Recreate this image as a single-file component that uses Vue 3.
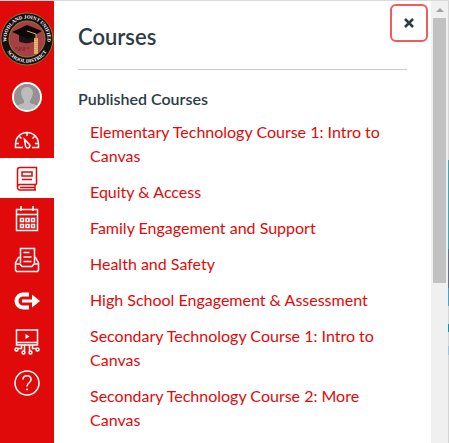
<script setup>
import { ref } from 'vue';

const open = ref(true);

const courses = ref([
  { id: 1, name: 'Elementary Technology Course 1: Intro to Canvas' },
  { id: 2, name: 'Equity & Access' },
  { id: 3, name: 'Family Engagement and Support' },
  { id: 4, name: 'Health and Safety' },
  { id: 5, name: 'High School Engagement & Assessment' },
  { id: 6, name: 'Secondary Technology Course 1: Intro to Canvas' },
  { id: 7, name: 'Secondary Technology Course 2: More Canvas' },
]);
</script>

<template>
  <div class="app">
    <nav class="global-nav" aria-label="Global">
      <a href="#" class="logo" aria-label="Home">
        <svg viewBox="0 0 54 54">
          <defs>
            <path id="arc-top" d="M10.200 38.800A20.500 20.500 0 1 1 43.800 38.800" />
            <path id="arc-bottom" d="M3.400 27A23.600 23.600 0 0 0 50.600 27" />
          </defs>
          <circle cx="27" cy="27" r="26" fill="#15100e" stroke="#8a7444" stroke-width="1" />
          <circle cx="27" cy="27" r="18" fill="#a64042" stroke="#9c7c3c" stroke-width="1" />
          <text class="seal" text-anchor="middle"><textPath href="#arc-top" startOffset="50%">WOODLAND JOINT UNIFIED</textPath></text>
          <text class="seal" text-anchor="middle"><textPath href="#arc-bottom" startOffset="50%">SCHOOL DISTRICT</textPath></text>
          <path d="M19 21v8c3 3 13 3 17-1v-7z" fill="#1d1412" />
          <path d="M12 20l15-7 15 6-14 8z" fill="#0b0808" />
          <path d="M27 19l9 3v4" fill="none" stroke="#d8a860" stroke-width="1" />
          <path d="M34 26h4v16h-4z" fill="#d9a25c" />
          <path d="M35 28v13M37 28v13" stroke="#f0d08c" stroke-width="1" stroke-dasharray="1 1" />
          <path d="M15 36h14M18 38h8" stroke="#6d2426" stroke-width="1" stroke-dasharray="3 1" />
        </svg>
      </a>

      <ul>
        <li>
          <a href="#" class="avatar-link" aria-label="Account">
            <svg class="avatar" viewBox="0 0 30 30">
              <defs>
                <clipPath id="face"><circle cx="15" cy="15" r="13" /></clipPath>
              </defs>
              <circle cx="15" cy="15" r="13" fill="#929292" />
              <g clip-path="url(#face)" fill="#bcbcbc">
                <path d="M15 5c4 0 6 3 6 6 0 2-1 3-1 4-1 2-2 3-2 4v2c2 1 7 1 9 5v4H3v-4c2-4 7-4 9-5v-2c0-1-1-2-2-4 0-1-1-2-1-4 0-3 2-6 6-6z" />
              </g>
              <circle cx="15" cy="15" r="14" fill="none" stroke="#fff" stroke-width="2" />
            </svg>
          </a>
        </li>
        <li>
          <a href="#" aria-label="Dashboard">
            <svg class="icon" viewBox="0 0 26 26">
              <path d="M9 23.500H1.500V20a11.500 11.500 0 0 1 23 0v3.500H18" />
              <path d="M13 9v3M5.500 12.500l2 2M20.500 12.500l-2 2M2 19.500h3M21 19.500h3" />
              <path d="M10.500 15.500l1 6.500a2.200 2.200 0 1 0 4-1.500z" />
            </svg>
          </a>
        </li>
        <li>
          <a href="#" class="active" aria-label="Courses" aria-current="page">
            <svg class="icon" viewBox="0 0 26 26">
              <path d="M22.500 19.500H6A2.500 2.500 0 0 0 3.500 22V5A2.500 2.500 0 0 1 6 2.500h16.500v17" />
              <path d="M3.500 22A2.500 2.500 0 0 0 6 25h16M21 19.500V25M6 22.500h15" />
              <path d="M8 7h10v4H8zM8 14.500h10" />
            </svg>
          </a>
        </li>
        <li>
          <a href="#" aria-label="Calendar">
            <svg class="icon" viewBox="0 0 26 26">
              <path d="M2.500 3.500h21v21h-21zM2.500 8.500h21M7 0v5M19 0v5" />
              <path d="M6.500 12.500h3v3h-3zM12 12.500h3v3h-3zM17.500 12.500h3v3h-3zM6.500 18.500h3v3h-3zM12 18.500h3v3h-3zM17.500 18.500h3v3h-3z" />
            </svg>
          </a>
        </li>
        <li>
          <a href="#" aria-label="Inbox">
            <svg class="icon" viewBox="0 0 26 26">
              <path d="M6.500 16V1.500h14V16M9.500 5.500h6M9.500 10h8M9.500 14.500h8" />
              <path d="M6 10.500H4.500L1.500 16v7l1 1.500h21l1-1.500v-7l-3-5.500H21M1.500 17H6l2 2.500h10l2-2.500h4.500" />
            </svg>
          </a>
        </li>
        <li>
          <a href="#" aria-label="Commons">
            <svg class="icon" viewBox="0 0 26 26">
              <path d="M15 6.500H9a6.500 6.500 0 0 0 0 13h6" stroke-width="4" />
              <path d="M8 11.500h10V6.500l8 6.500-8 6.500v-5H8z" fill="#fff" stroke="none" />
            </svg>
          </a>
        </li>
        <li>
          <a href="#" aria-label="Studio">
            <svg class="icon" viewBox="0 0 26 26">
              <path d="M2.500 1h21v15h-21zM2.500 13.500h21M10.500 16v6M15.500 16v6M7.500 16v3.500H4M18.500 16v3.500H22" />
              <path d="M11.500 5l4 2.500-4 2.500z" fill="#fff" stroke="none" />
              <g>
                <circle cx="2.500" cy="20.500" r="1.500" />
                <circle cx="9.500" cy="23.500" r="1.500" />
                <circle cx="16.500" cy="23.500" r="1.500" />
                <circle cx="23.500" cy="20.500" r="1.500" />
              </g>
            </svg>
          </a>
        </li>
        <li>
          <a href="#" aria-label="Help">
            <svg class="icon" viewBox="0 0 26 26">
              <circle cx="13" cy="13" r="12" />
              <path d="M9 9.500C9 4.500 17 4.500 17 9.500c0 3.500-4 3-4 7" />
              <circle cx="13" cy="19.500" r="1" fill="#fff" stroke="none" />
            </svg>
          </a>
        </li>
      </ul>
    </nav>

    <section v-if="open" class="tray">
      <button class="close-btn" type="button" aria-label="Close" @click="open = false">
        <svg viewBox="0 0 12 12"><path d="M2 2l8 8M10 2l-8 8" /></svg>
      </button>
      <h1>Courses</h1>
      <hr />
      <h2>Published Courses</h2>
      <ul class="course-list">
        <li v-for="course in courses" :key="course.id">
          <a href="#">{{ course.name }}</a>
        </li>
      </ul>
    </section>

    <div class="scrollbar" aria-hidden="true">
      <div class="arrow"></div>
      <div class="thumb"></div>
    </div>
    <div class="page-edge" aria-hidden="true"></div>
  </div>
</template>

<style>
body {
  background: #fff;
}
</style>

<style scoped>
.app {
  display: flex;
  height: 100vh;
  box-sizing: border-box;
  border-top: 1px solid #d9d9de;
  overflow: hidden;
  font-family: Lato, "Liberation Sans", sans-serif;
  font-size: 16px;
  line-height: 24px;
  color: #2d3b45;
}
ul {
  list-style: none;
  margin: 0;
  padding: 0;
}
.global-nav {
  flex: none;
  width: 54px;
  background: #e10a0a;
}
.logo {
  display: block;
  padding: 11px 0;
}
.logo svg {
  display: block;
  width: 54px;
  height: 54px;
}
.seal {
  font-family: "Liberation Serif", serif;
  font-size: 5px;
  font-weight: bold;
  fill: #fff;
}
.global-nav li {
  margin-bottom: 1px;
}
.global-nav li a {
  display: flex;
  align-items: center;
  justify-content: center;
  height: 40px;
  color: #fff;
}
.global-nav li .avatar-link {
  height: 39px;
}
.avatar {
  width: 30px;
  height: 30px;
}
.icon {
  width: 26px;
  height: 26px;
  fill: none;
  stroke: currentColor;
  stroke-width: 1.5;
}
.global-nav li .active {
  background: #fff;
  color: #e10a0a;
}
.tray {
  position: relative;
  flex: 1;
  min-width: 0;
  padding: 20px 24px;
}
.close-btn {
  position: absolute;
  top: 3px;
  right: 3px;
  display: flex;
  align-items: center;
  justify-content: center;
  width: 38px;
  height: 38px;
  padding: 0;
  background: #fff;
  border: 2px solid #ee5c5c;
  border-radius: 6px;
  cursor: pointer;
}
.close-btn svg {
  width: 12px;
  height: 12px;
  stroke: #2d3b45;
  stroke-width: 2.5;
}
h1 {
  margin: 0;
  font-size: 22px;
  font-weight: 600;
  line-height: 32px;
}
hr {
  margin: 16px 0;
  border: 0;
  border-top: 1px solid #c7cdd1;
}
h2 {
  margin: 0 0 8px;
  font-size: 16px;
  font-weight: 600;
  line-height: 26px;
}
.course-list {
  padding: 0 12px;
}
.course-list li {
  margin-bottom: 12px;
}
.course-list a {
  color: #e10a0a;
  text-decoration: none;
}
.scrollbar {
  display: flex;
  flex-direction: column;
  align-items: center;
  flex: none;
  width: 17px;
  background: #f0f0f0;
}
.arrow {
  margin: 7px 0 6px;
  border: 4px solid transparent;
  border-top: 0;
  border-bottom-color: #a3a3a3;
}
.thumb {
  width: 13px;
  height: 60%;
  background: #c1c1c1;
}
.page-edge {
  flex: none;
  width: 1px;
  background: linear-gradient(#d4d4d4 36%, #46a5b0 36%, #46a5b0 56%, #66708a 56%, #66708a 65%, #4aa3c7 65%, #4aa3c7 69%, #d4d4d4 69%, #d4d4d4 73%, #1292ae 73%, #1292ae 75%, #d4d4d4 75%, #d4d4d4 78%, #8ec8e8 78%, #8ec8e8 80%, #d4d4d4 80%);
}
</style>
